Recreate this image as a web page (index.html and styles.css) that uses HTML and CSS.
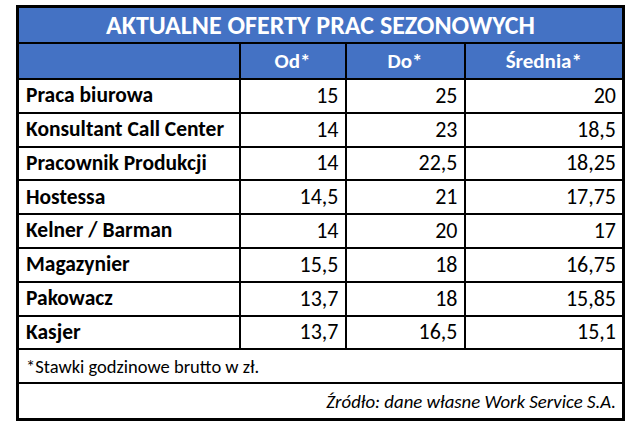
FILE: index.html
```html
<!DOCTYPE html>
<html lang="pl">
<head>
<meta charset="utf-8">
<title>Aktualne oferty prac sezonowych</title>
<link rel="stylesheet" href="styles.css">
</head>
<body>
<table class="offers">
  <colgroup>
    <col class="c-name"><col class="c-num1"><col class="c-num2"><col class="c-num3">
  </colgroup>
  <thead>
    <tr class="title-row"><th colspan="4">AKTUALNE OFERTY PRAC SEZONOWYCH</th></tr>
    <tr class="head-row"><th></th><th>Od*</th><th>Do*</th><th>Średnia*</th></tr>
  </thead>
  <tbody>
    <tr><td class="name">Praca biurowa</td><td>15</td><td>25</td><td>20</td></tr>
    <tr><td class="name">Konsultant Call Center</td><td>14</td><td>23</td><td>18,5</td></tr>
    <tr><td class="name">Pracownik Produkcji</td><td>14</td><td>22,5</td><td>18,25</td></tr>
    <tr><td class="name">Hostessa</td><td>14,5</td><td>21</td><td>17,75</td></tr>
    <tr><td class="name">Kelner / Barman</td><td>14</td><td>20</td><td>17</td></tr>
    <tr><td class="name">Magazynier</td><td>15,5</td><td>18</td><td>16,75</td></tr>
    <tr><td class="name">Pakowacz</td><td>13,7</td><td>18</td><td>15,85</td></tr>
    <tr><td class="name">Kasjer</td><td>13,7</td><td>16,5</td><td>15,1</td></tr>
  </tbody>
  <tfoot>
    <tr class="note-row"><td colspan="4">*Stawki godzinowe brutto w zł.</td></tr>
    <tr class="source-row"><td colspan="4">Źródło: dane własne Work Service S.A.</td></tr>
  </tfoot>
</table>
</body>
</html>
```

FILE: styles.css
```css
html, body {
  margin: 0;
  padding: 0;
  background: #ffffff;
}

body {
  padding: 5px 0 0 16px;
  font-family: "Carlito", "Lato", "Open Sans", sans-serif;
  color: #000000;
}

.offers {
  border-collapse: collapse;
  border: 3px solid #000;
  width: 609px;
}

.c-name { width: 222px; }
.c-num1 { width: 106px; }
.c-num2 { width: 119px; }
.c-num3 { width: 159px; }

.offers th,
.offers td {
  border: 2px solid #000;
  padding: 0 6px;
  line-height: 1;
}

.title-row th {
  background: #4472c4;
  color: #ffffff;
  font-size: 26px;
  font-weight: 700;
  text-align: center;
  height: 34px;
}

.head-row th {
  background: #4472c4;
  color: #ffffff;
  font-size: 21px;
  font-weight: 700;
  text-align: center;
  height: 34px;
}

tbody td {
  height: 31.8px;
  font-size: 22px;
  text-align: right;
  padding: 2px 6px 0 6px;
}

tbody td.name {
  text-align: left;
  font-size: 21.5px;
  font-weight: 700;
  padding-left: 7px;
}

.note-row td {
  height: 31px;
  font-size: 18.5px;
  text-align: left;
  padding: 1px 6px 0 7px;
}

.source-row td {
  height: 32px;
  font-size: 18.8px;
  font-style: italic;
  text-align: right;
  padding: 2px 6px 0 6px;
}
```
